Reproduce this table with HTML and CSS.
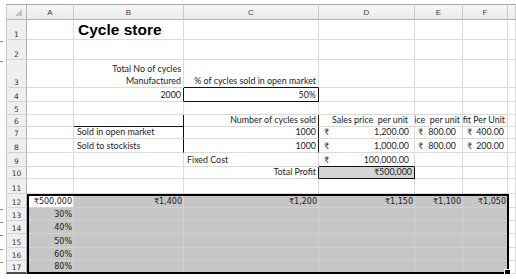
FILE: index.html
```html
<!DOCTYPE html>
<html>
<head>
<meta charset="utf-8">
<link rel="stylesheet" href="styles.css">
</head>
<body>
<div class="sheet">
  <div class="hd corner"></div><div class="hd">A</div><div class="hd">B</div><div class="hd">C</div><div class="hd">D</div><div class="hd">E</div><div class="hd">F</div><div class="hd"></div>

  <div class="rh">1</div><div class="c"></div><div class="c title">Cycle store</div><div class="c"></div><div class="c"></div><div class="c"></div><div class="c"></div><div class="c"></div>

  <div class="rh tick">2</div><div class="c"></div><div class="c"></div><div class="c"></div><div class="c"></div><div class="c"></div><div class="c"></div><div class="c"></div>

  <div class="rh tick">3</div><div class="c"></div><div class="c two"><span>Total No of cycles</span><span>Manufactured</span></div><div class="c r bb">% of cycles sold in open market</div><div class="c"></div><div class="c"></div><div class="c"></div><div class="c"></div>

  <div class="rh">4</div><div class="c"></div><div class="c r br">2000</div><div class="c r br bb">50%</div><div class="c"></div><div class="c"></div><div class="c"></div><div class="c"></div>

  <div class="rh">5</div><div class="c"></div><div class="c"></div><div class="c"></div><div class="c"></div><div class="c"></div><div class="c"></div><div class="c"></div>

  <div class="rh">6</div><div class="c"></div><div class="c bb br"></div><div class="c r br">Number of cycles sold</div><div class="c r pr">Sales price&nbsp; per unit</div><div class="c r">Cost price&nbsp; per unit</div><div class="c r">Profit Per Unit</div><div class="c"></div>

  <div class="rh">7</div><div class="c"></div><div class="c br">Sold in open market</div><div class="c r br">1000</div><div class="c acc"><span>₹</span><span>1,200.00</span></div><div class="c acc acc-e"><span>₹</span><span>800.00</span></div><div class="c acc acc-f"><span>₹</span><span>400.00</span></div><div class="c"></div>

  <div class="rh">8</div><div class="c"></div><div class="c br">Sold to stockists</div><div class="c r br">1000</div><div class="c acc"><span>₹</span><span>1,000.00</span></div><div class="c acc acc-e"><span>₹</span><span>800.00</span></div><div class="c acc acc-f"><span>₹</span><span>200.00</span></div><div class="c"></div>

  <div class="rh">9</div><div class="c"></div><div class="c"></div><div class="c">Fixed Cost</div><div class="c acc bb"><span>₹</span><span>100,000.00</span></div><div class="c"></div><div class="c"></div><div class="c"></div>

  <div class="rh">10</div><div class="c"></div><div class="c"></div><div class="c r br">Total Profit</div><div class="c r total">₹500,000</div><div class="c"></div><div class="c"></div><div class="c"></div>

  <div class="rh">11</div><div class="c"></div><div class="c"></div><div class="c"></div><div class="c"></div><div class="c"></div><div class="c"></div><div class="c"></div>
</div>

<div class="lower">
  <div class="rhcol">
    <div class="rh">12</div><div class="rh tick">13</div><div class="rh tick">14</div><div class="rh tick">15</div><div class="rh tick">16</div><div class="rh tick last">17</div>
  </div>
  <div class="range">
    <div class="c r n active">₹500,000</div><div class="c s r n">₹1,400</div><div class="c s r n">₹1,200</div><div class="c s r n">₹1,150</div><div class="c s r n">₹1,100</div><div class="c s r n">₹1,050</div>
    <div class="c s r n">30%</div><div class="c s"></div><div class="c s"></div><div class="c s"></div><div class="c s"></div><div class="c s"></div>
    <div class="c s r n">40%</div><div class="c s"></div><div class="c s"></div><div class="c s"></div><div class="c s"></div><div class="c s"></div>
    <div class="c s r n">50%</div><div class="c s"></div><div class="c s"></div><div class="c s"></div><div class="c s"></div><div class="c s"></div>
    <div class="c s r n">60%</div><div class="c s"></div><div class="c s"></div><div class="c s"></div><div class="c s"></div><div class="c s"></div>
    <div class="c s r n">80%</div><div class="c s"></div><div class="c s"></div><div class="c s"></div><div class="c s"></div><div class="c s"></div>
  </div>
  <div class="gcol">
    <div class="c"></div><div class="c"></div><div class="c"></div><div class="c"></div><div class="c"></div><div class="c"></div>
  </div>
</div>
</body>
</html>
```

FILE: styles.css
```css
* { box-sizing: border-box; }
body {
  margin: 0;
  background: #fff;
  font-family: Lato, "Liberation Sans", sans-serif;
}
.sheet {
  display: grid;
  grid-template-columns: 21px 47px 110px 135px 96px 48px 45px 8px;
  grid-template-rows: 16px 20px 20px 28px 14px 13px 12px 12px 14px 14px 12px 15px;
  padding: 4px 0 0 6px;
}
.hd {
  background: linear-gradient(#f6f6f6, #ebebeb);
  border-top: 1px solid #a4a4a4;
  border-right: 1px solid #cbcbcb;
  border-bottom: 1px solid #b3b3b3;
  display: flex;
  align-items: center;
  justify-content: center;
  font-family: "Liberation Sans", sans-serif;
  font-size: 8px;
  color: #404040;
}
.corner {
  border-left: 1px solid #c8c8c8;
  border-right: 1px solid #b3b3b3;
  position: relative;
}
.corner::after {
  content: "";
  position: absolute;
  right: 4px;
  bottom: 3px;
  width: 0;
  height: 0;
  border-left: 7px solid transparent;
  border-bottom: 7px solid #c4c4c4;
}
.rh {
  background: #efefef;
  border-left: 1px solid #c8c8c8;
  border-right: 1px solid #b3b3b3;
  border-bottom: 1px solid #d4d4d4;
  display: flex;
  align-items: flex-end;
  justify-content: center;
  padding-bottom: 1px;
  font-family: "DejaVu Sans", sans-serif;
  font-size: 7.5px;
  line-height: 1;
  color: #383838;
  position: relative;
}
.rh.tick::before {
  content: "";
  position: absolute;
  left: -7px;
  top: 1px;
  width: 3px;
  height: 1px;
  background: #8a8a8a;
}
.rh.last { border-bottom: 2px solid #4a4a4a; }
.c {
  border-right: 1px solid #dadada;
  border-bottom: 1px solid #dadada;
  display: flex;
  align-items: flex-end;
  overflow: hidden;
  white-space: nowrap;
  font-size: 8.9px;
  line-height: 1;
  color: #1c1c1c;
  padding: 0 2px 1px 3px;
}
.r { justify-content: flex-end; }
.pr { padding-right: 6px; }
.br { border-right-color: #111; }
.bb { border-bottom-color: #111; }
.title {
  font-family: "Liberation Sans", Arial, sans-serif;
  font-weight: bold;
  font-size: 15.5px;
  color: #000;
  padding-left: 4px;
  padding-bottom: 2px;
}
.two {
  flex-direction: column;
  align-items: flex-end;
  justify-content: flex-end;
  line-height: 12px;
  padding-bottom: 0;
}
.acc {
  justify-content: space-between;
  padding: 0 5px 1px 5px;
}
.acc-e { padding: 0 6px 1px 3px; }
.acc-f { padding: 0 3px 1px 4px; }
.total {
  background: #d6d6d6;
  border-right-color: #111;
  border-bottom-color: #111;
}
.n {
  font-family: "DejaVu Sans", sans-serif;
  font-size: 8px;
  color: #202020;
  padding-right: 1px;
}
.lower {
  display: flex;
  padding-left: 6px;
}
.rhcol {
  width: 21px;
  display: grid;
  grid-template-rows: 14px 13px 13px 14px 13px 13px;
}
.range {
  width: 482px;
  border: 2px solid #000;
  display: grid;
  grid-template-columns: 45px 110px 135px 96px 48px 44px;
  grid-template-rows: 12px 13px 13px 14px 13px 11px;
  position: relative;
  background: #c6c6c6;
}
.range::after {
  content: "";
  position: absolute;
  right: -4px;
  bottom: -4px;
  width: 5px;
  height: 5px;
  background: #000;
  border: 1px solid #fff;
}
.range .c:nth-child(6n) { border-right: none; }
.range .c:nth-last-child(-n+6) { border-bottom: none; }
.gcol {
  width: 7px;
  display: grid;
  grid-template-rows: 14px 13px 13px 14px 13px 13px;
}
.s {
  background: #c6c6c6;
  border-right-color: #d2d2d2;
  border-bottom-color: #d2d2d2;
}
.active {
  background: #fff;
  border-right-color: #d2d2d2;
  border-bottom-color: #d2d2d2;
}
```
